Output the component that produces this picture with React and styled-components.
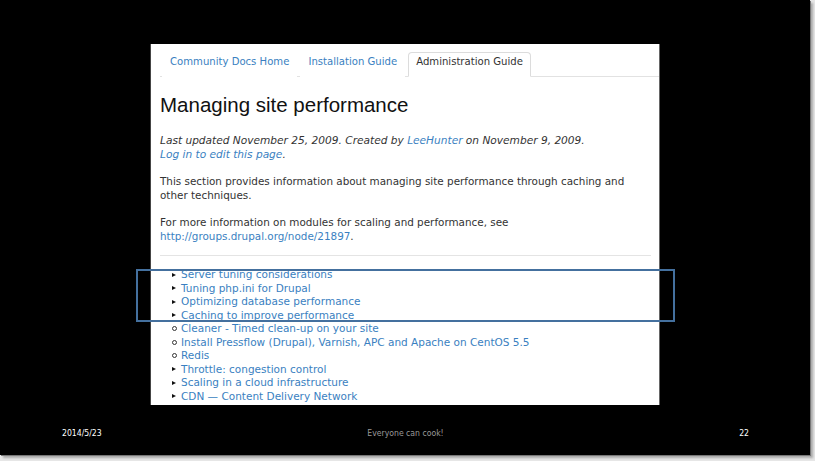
import React from 'react';
import styled, { createGlobalStyle } from 'styled-components';

const Global = createGlobalStyle`
  html, body { margin: 0; padding: 0; background: #e6e6e6; }
  body { width: 815px; height: 461px; overflow: hidden; }
`

const Slide = styled.div`
  position: relative;
  width: 810px;
  height: 455px;
  background: #000;
  box-shadow: 1px 1px 0 #777, 3px 3px 2px #aaa;
  display: flex;
  flex-direction: column;
`

const Page = styled.div`
  position: relative;
  margin: 44px 0 0 150px;
  width: 491px;
  height: 361px;
  background: #fff;
  border-left: 1px solid #444;
  border-right: 1px solid #666;
  padding: 0 8px 0 9px;
  overflow: hidden;
  font-family: "DejaVu Sans", Verdana, sans-serif;
  color: #333;
`

const Tabs = styled.div`
  display: flex;
  align-items: flex-end;
  gap: 3px;
  height: 32px;
  margin-right: -8px;
  padding-left: 2px;
  border-bottom: 1px solid #e2e2e2;
`

const Tab = styled.div`
  font-size: 10.1px;
  line-height: 18px;
  padding: 0 7px 5px;
  margin-bottom: -1px;
  color: ${p => (p.active ? '#333' : '#3a7fc1')};
  background: #fff;
  border: 1px solid ${p => (p.active ? '#dcdcdc' : 'transparent')};
  border-bottom-color: ${p => (p.active ? '#fff' : 'transparent')};
  border-radius: 4px 4px 0 0;
  white-space: nowrap;
`

const Title = styled.h1`
  margin: 15px 0 0;
  font-family: "Liberation Sans", Arial, sans-serif;
  font-weight: normal;
  font-size: 20.5px;
  line-height: 26px;
  color: #111;
`

const Para = styled.p`
  margin: ${p => p.top || 0}px 0 0;
  font-size: ${p => (p.italic ? '10.6px' : '10.4px')};
  line-height: 14px;
  font-style: ${p => (p.italic ? 'italic' : 'normal')};
`

const A = styled.span`
  color: #3a7fc1;
`

const Rule = styled.div`
  height: 1px;
  background: #e4e4e4;
  margin: 12px 0 0;
`

const List = styled.ul`
  list-style: none;
  margin: 12px 0 0;
  padding: 0 0 0 12px;
`

const Item = styled.li`
  display: flex;
  align-items: center;
  gap: 4px;
  font-size: 10.5px;
  line-height: 13.5px;
  color: #3a7fc1;
  white-space: nowrap;
`

const Tri = styled.span`
  width: 0;
  height: 0;
  border-top: 2.5px solid transparent;
  border-bottom: 2.5px solid transparent;
  border-left: 4px solid #111;
  margin-right: 1px;
`

const Ring = styled.span`
  width: 3px;
  height: 3px;
  border: 1px solid #333;
  border-radius: 50%;
`

const Highlight = styled.div`
  position: absolute;
  left: 136px;
  top: 269px;
  width: 535px;
  height: 49px;
  border: 2px solid #44709e;
`

const Footer = styled.div`
  display: grid;
  grid-template-columns: 1fr auto 1fr;
  align-items: center;
  margin-top: 23px;
  padding: 0 61px 0 62px;
  font-family: "DejaVu Sans Condensed", "Liberation Sans", sans-serif;
  font-size: 8.6px;
`

const FootText = styled.span`
  color: ${p => p.dim ? '#9a9a9a' : '#fff'};
  justify-self: ${p => p.align || 'start'};
`

const items = [
  ['tri', 'Server tuning considerations'],
  ['tri', 'Tuning php.ini for Drupal'],
  ['tri', 'Optimizing database performance'],
  ['tri', 'Caching to improve performance'],
  ['ring', 'Cleaner - Timed clean-up on your site'],
  ['ring', 'Install Pressflow (Drupal), Varnish, APC and Apache on CentOS 5.5'],
  ['ring', 'Redis'],
  ['tri', 'Throttle: congestion control'],
  ['tri', 'Scaling in a cloud infrastructure'],
  ['tri', 'CDN \u2014 Content Delivery Network'],
]

const App = () => {
  return (
    <>
      <Global />
      <Slide>
        <Page>
          <Tabs>
            <Tab>Community Docs Home</Tab>
            <Tab>Installation Guide</Tab>
            <Tab active>Administration Guide</Tab>
          </Tabs>
          <Title>Managing site performance</Title>
          <Para italic top={15}>
            Last updated November 25, 2009. Created by <A>LeeHunter</A> on November 9, 2009.
            <br />
            <A>Log in to edit this page</A>.
          </Para>
          <Para top={13}>
            This section provides information about managing site performance through caching and
            <br />
            other techniques.
          </Para>
          <Para top={13}>
            For more information on modules for scaling and performance, see
            <br />
            <A>http://groups.drupal.org/node/21897</A>.
          </Para>
          <Rule />
          <List>
            {items.map(([kind, text]) => (
              <Item key={text}>
                {kind === 'tri' ? <Tri /> : <Ring />}
                {text}
              </Item>
            ))}
          </List>
        </Page>
        <Highlight />
        <Footer>
          <FootText>2014/5/23</FootText>
          <FootText dim align="center">Everyone can cook!</FootText>
          <FootText align="end">22</FootText>
        </Footer>
      </Slide>
    </>
  )
}

export default App
